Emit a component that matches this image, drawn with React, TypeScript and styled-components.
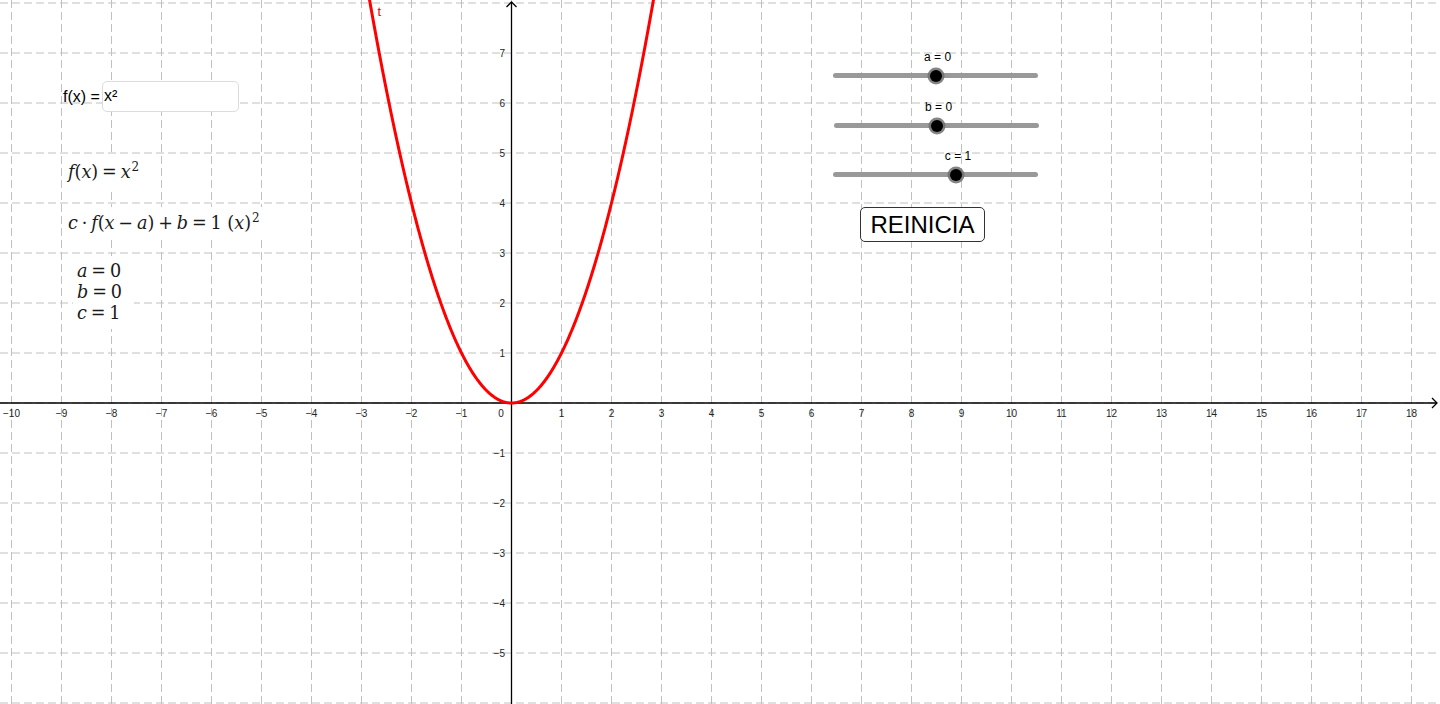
import React from "react";
import styled, { createGlobalStyle } from "styled-components";

const GlobalStyle = createGlobalStyle`
  html, body { margin: 0; padding: 0; background: #ffffff; overflow: hidden; }
  #root { width: 1440px; height: 704px; }
`;

const OX = 511.5;
const OY = 403;
const U = 50;
const W = 1440;
const H = 704;

const Canvas = styled.div`
  position: relative;
  width: ${W}px;
  height: ${H}px;
  overflow: hidden;
  background: #ffffff;
  font-family: "Liberation Sans", Arial, sans-serif;
`;

const GraphSvg = styled.svg`
  display: block;
  width: ${W}px;
  height: ${H}px;
`;

const Placed = styled.div<{ $x: number; $y: number }>`
  position: absolute;
  left: ${(p) => p.$x}px;
  top: ${(p) => p.$y}px;
`;

/* ---------- input box ---------- */
const InputRow = styled(Placed)`
  display: flex;
  align-items: center;
  gap: 2px;
`;
const InputLabel = styled.span`
  font-size: 16px;
  color: #000;
  line-height: 30px;
`;
const InputBox = styled.div`
  box-sizing: border-box;
  width: 137px;
  height: 31px;
  border: 1.5px solid #dcdcdc;
  border-radius: 5px;
  background: #fff;
  font-size: 16px;
  line-height: 28px;
  padding-left: 1px;
  color: #000;
`;

/* ---------- formulas ---------- */
const Formula = styled(Placed)`
  font-family: "DejaVu Serif", "Liberation Serif", serif;
  font-size: 17.6px;
  color: #1a1a1a;
  white-space: nowrap;
  line-height: 21px;
  background: #ffffff;
  padding: 6px 4px 5px 4px;
`;
const V = styled.i`
  font-style: italic;
`;
const Op = styled.span`
  margin: 0 0.22em;
`;
const Sup = styled.sup`
  font-size: 0.68em;
  vertical-align: 0.6em;
  line-height: 0;
  margin-left: 1px;
`;
const ValueStack = styled(Placed)`
  display: flex;
  flex-direction: column;
  font-family: "DejaVu Serif", "Liberation Serif", serif;
  font-size: 17.6px;
  line-height: 21px;
  color: #1a1a1a;
  background: #ffffff;
  padding: 5px 12px 5px 4px;
`;

/* ---------- sliders ---------- */
const SliderWrap = styled(Placed)`
  width: 205px;
  height: 34px;
  display: flex;
  flex-direction: column;
`;
const SliderLabelRow = styled.div`
  position: relative;
  height: 20px;
`;
const SliderLabel = styled.span`
  position: absolute;
  top: -3px;
  transform: translateX(-50%);
  font-size: 12px;
  color: #000;
  white-space: nowrap;
`;
const Track = styled.div`
  position: relative;
  height: 5px;
  border-radius: 3px;
  background: #999999;
`;
const Knob = styled.div`
  position: absolute;
  top: 50%;
  width: 12px;
  height: 12px;
  border-radius: 50%;
  background: #000;
  box-shadow: 0 0 0 2.5px rgba(110, 110, 110, 0.85);
  transform: translate(-50%, -50%);
`;

/* ---------- button ---------- */
const Button = styled.button`
  position: absolute;
  left: 860px;
  top: 207px;
  box-sizing: border-box;
  width: 125px;
  height: 35px;
  padding: 0;
  border: 1.3px solid #333;
  border-radius: 5px;
  background: #fff;
  font-family: "Liberation Sans", Arial, sans-serif;
  font-size: 24px;
  color: #000;
  line-height: 31px;
  cursor: pointer;
`;

const fmt = (n: number) => (n < 0 ? "\u2212" + Math.abs(n) : String(n));

function Slider({ x, y, frac, label }: { x: number; y: number; frac: number; label: string }) {
  return (
    <SliderWrap $x={x} $y={y}>
      <SliderLabelRow>
        <SliderLabel style={{ left: `${frac * 100 + 1}%` }}>{label}</SliderLabel>
      </SliderLabelRow>
      <Track>
        <Knob style={{ left: `${frac * 100}%` }} />
      </Track>
    </SliderWrap>
  );
}

function Graph() {
  const vLines: number[] = [];
  for (let k = -10; k <= 18; k++) vLines.push(k);
  const hLines: number[] = [];
  for (let k = -6; k <= 8; k++) hLines.push(k);

  const pts: string[] = [];
  for (let x = -2.9; x <= 2.9001; x += 0.02) {
    const sx = OX + x * U;
    const sy = OY - x * x * U;
    pts.push(`${sx.toFixed(2)},${sy.toFixed(2)}`);
  }

  return (
    <GraphSvg viewBox={`0 0 ${W} ${H}`}>
      <g stroke="#c0c0c0" strokeWidth={1} strokeDasharray="8 4">
        {vLines.map((k) => (
          <line key={"v" + k} x1={OX + k * U} y1={0} x2={OX + k * U} y2={H} />
        ))}
        {hLines.map((k) => (
          <line key={"h" + k} x1={0} y1={OY - k * U} x2={W} y2={OY - k * U} />
        ))}
      </g>
      <g stroke="#000" strokeWidth={1.3} fill="none">
        <line x1={0} y1={OY} x2={1437} y2={OY} />
        <polyline points={`1432,398 1437,403 1432,408`} />
        <line x1={OX} y1={H} x2={OX} y2={2} />
        <polyline points={`506.5,7 511.5,2 516.5,7`} />
      </g>
      <g fontFamily="'Liberation Sans', Arial, sans-serif" fontSize={10} fill="#222">
        {vLines
          .filter((k) => k !== 0)
          .map((k) => (
            <text key={"xl" + k} x={OX + k * U} y={417} textAnchor="middle">
              {fmt(k)}
            </text>
          ))}
        <text x={501} y={417} textAnchor="middle">0</text>
        {[-5, -4, -3, -2, -1, 1, 2, 3, 4, 5, 6, 7].map((k) => (
          <text key={"yl" + k} x={505} y={OY - k * U + 3.5} textAnchor="end">
            {fmt(k)}
          </text>
        ))}
      </g>
      <polyline points={pts.join(" ")} fill="none" stroke="#ff0000" strokeWidth={3} strokeLinejoin="round" />
      <text x={377.5} y={15.5} fill="#ff0000" fontFamily="'Liberation Sans', Arial, sans-serif" fontSize={13}>
        t
      </text>
    </GraphSvg>
  );
}

export default function App() {
  return (
    <>
      <GlobalStyle />
      <Canvas>
        <Graph />

        <InputRow $x={63} $y={81}>
          <InputLabel>f(x) =</InputLabel>
          <InputBox>x²</InputBox>
        </InputRow>

        <Formula $x={64} $y={156}>
          <V>f</V>(<V>x</V>)<Op>=</Op>
          <V>x</V>
          <Sup>2</Sup>
        </Formula>

        <Formula $x={64} $y={207}>
          <V>c</V>
          <Op>·</Op>
          <V>f</V>(<V>x</V>
          <Op>−</Op>
          <V>a</V>)<Op>+</Op>
          <V>b</V>
          <Op>=</Op>1 (<V>x</V>)<Sup>2</Sup>
        </Formula>

        <ValueStack $x={73} $y={256}>
          <span>
            <V>a</V>
            <Op>=</Op>0
          </span>
          <span>
            <V>b</V>
            <Op>=</Op>0
          </span>
          <span>
            <V>c</V>
            <Op>=</Op>1
          </span>
        </ValueStack>

        <Slider x={833} y={53} frac={0.5} label="a = 0" />
        <Slider x={834} y={103} frac={0.5} label="b = 0" />
        <Slider x={833} y={152} frac={0.6} label="c = 1" />

        <Button>REINICIA</Button>
      </Canvas>
    </>
  );
}
